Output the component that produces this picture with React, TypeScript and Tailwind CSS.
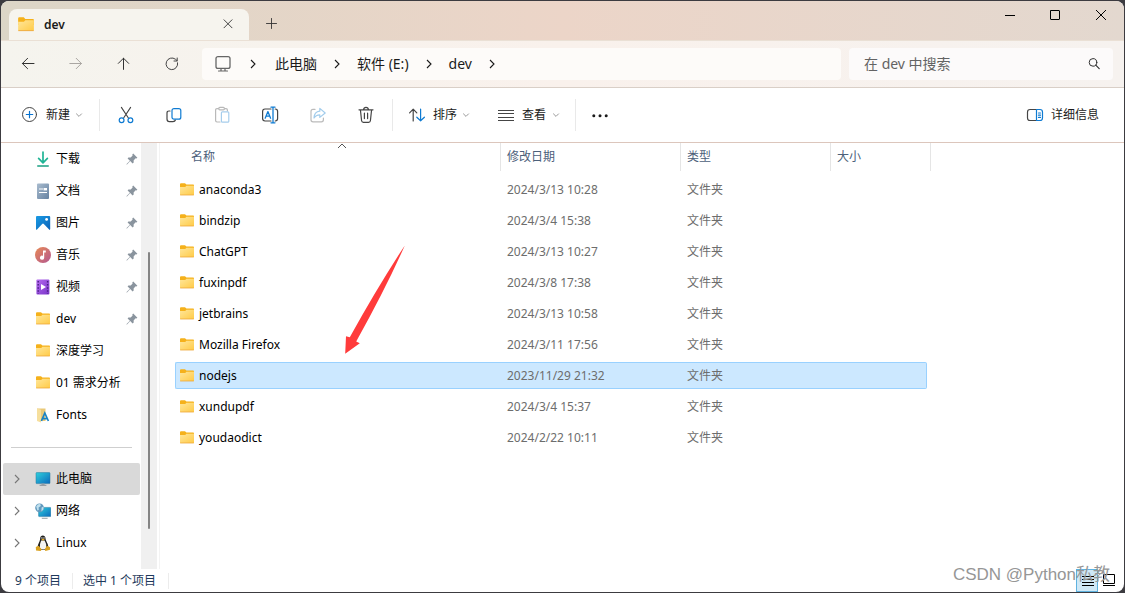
import type { ReactNode } from 'react';

type IconProps = { className?: string };

const FolderIcon = ({ className = 'h-4 w-4' }: IconProps) => (
  <svg className={className} viewBox="0 0 16 16" aria-hidden="true">
    <defs>
      <linearGradient id="folderFace" x1="0" y1="0" x2="1" y2="1">
        <stop offset="0" stopColor="#ffe69a" />
        <stop offset="1" stopColor="#ffcb47" />
      </linearGradient>
    </defs>
    <path d="M1 2.2Q1 1.2 2 1.2H6L7.4 2.6H14.2Q15 2.6 15 3.4V8H1Z" fill="#f5b11b" />
    <path d="M1 5H6.2L7.4 3.8H15V13H1Z" fill="url(#folderFace)" />
    <path d="M1.2 13H14.8" stroke="#eda73a" strokeWidth="0.8" />
  </svg>
);

const Line = ({ children, className = 'h-5 w-5' }: { children: ReactNode; className?: string }) => (
  <svg
    className={className}
    viewBox="0 0 20 20"
    fill="none"
    stroke="#454545"
    strokeWidth="1.2"
    strokeLinecap="round"
    strokeLinejoin="round"
    aria-hidden="true"
  >
    {children}
  </svg>
);

const Chevron = ({ className = 'h-3 w-3' }: IconProps) => (
  <svg className={className} viewBox="0 0 12 12" fill="none" stroke="currentColor" strokeWidth="1.1" aria-hidden="true">
    <path d="M4 2L8 6L4 10" />
  </svg>
);

const DownChevron = () => (
  <svg className="h-2 w-2" viewBox="0 0 8 8" fill="none" stroke="#999" strokeWidth="1" aria-hidden="true">
    <path d="M1.2 2.6L4 5.4L6.8 2.6" />
  </svg>
);

const Pin = () => (
  <svg className="h-3 w-3" viewBox="0 0 12 12" fill="#8a949e" aria-hidden="true">
    <path d="M7.2 0.6L11.4 4.8L10.4 5.6L9.6 5.3L7.6 7.4L7.7 9.6L6.6 10.4L4.2 8L1 11.4L0.5 11.5L0.6 11L3.9 7.7L1.6 5.4L2.4 4.4L4.7 4.4L6.6 2.4L6.3 1.5Z" />
  </svg>
);

const DownloadIcon = () => (
  <svg className="h-4 w-4" viewBox="0 0 16 16" fill="none" strokeLinecap="round" strokeLinejoin="round" aria-hidden="true">
    <path d="M8 1V11.5M3.6 7.4L8 11.8L12.4 7.4" stroke="#1fb495" strokeWidth="1.7" />
    <path d="M2.8 15H13.2" stroke="#1aa083" strokeWidth="1.6" />
  </svg>
);

const DocumentIcon = () => (
  <svg className="h-4 w-4" viewBox="0 0 16 16" aria-hidden="true">
    <defs>
      <linearGradient id="docFill" x1="0" y1="0" x2="1" y2="1">
        <stop offset="0" stopColor="#a9bccf" />
        <stop offset="1" stopColor="#6682a1" />
      </linearGradient>
    </defs>
    <rect x="2" y="0.5" width="12" height="15.5" rx="1" fill="url(#docFill)" />
    <path d="M4 6H8M4 9.5H12" stroke="#fff" strokeWidth="1.2" />
    <rect x="8.6" y="5" width="3.4" height="2.4" fill="#fff" />
  </svg>
);

const PictureIcon = () => (
  <svg className="h-4 w-4" viewBox="0 0 16 16" aria-hidden="true">
    <defs>
      <linearGradient id="picFill" x1="0" y1="0" x2="1" y2="1">
        <stop offset="0" stopColor="#1a9be4" />
        <stop offset="1" stopColor="#0b62b8" />
      </linearGradient>
    </defs>
    <rect x="1" y="1" width="14.2" height="14" rx="1" fill="url(#picFill)" />
    <path d="M1.6 15L7.2 9Q8 8.2 8.8 9L14.6 15Z" fill="#fff" />
    <circle cx="11.6" cy="4.4" r="1.4" fill="#fff" />
  </svg>
);

const MusicIcon = () => (
  <svg className="h-4 w-4" viewBox="0 0 16 16" aria-hidden="true">
    <defs>
      <linearGradient id="musicFill" x1="0" y1="0" x2="1" y2="1">
        <stop offset="0" stopColor="#e88a54" />
        <stop offset="1" stopColor="#b35791" />
      </linearGradient>
    </defs>
    <circle cx="8" cy="8" r="8" fill="url(#musicFill)" />
    <path d="M8 3.4H10.8V5.6H9.2V10.6A2.1 2.1 0 1 1 8 8.8Z" fill="#fff" />
  </svg>
);

const VideoIcon = () => (
  <svg className="h-4 w-4" viewBox="0 0 16 16" aria-hidden="true">
    <defs>
      <linearGradient id="videoFill" x1="0" y1="0" x2="1" y2="1">
        <stop offset="0" stopColor="#b469ee" />
        <stop offset="1" stopColor="#7a35c9" />
      </linearGradient>
    </defs>
    <rect x="1.4" y="0.6" width="13" height="15" rx="1" fill="url(#videoFill)" />
    <path d="M3.2 2V15M12.6 2V15" stroke="#47207f" strokeWidth="1.4" strokeDasharray="1.5 1.6" />
    <path d="M6 5V11L11 8Z" fill="#fff" />
  </svg>
);

const FontsIcon = () => (
  <svg className="h-4 w-4" viewBox="0 0 16 16" aria-hidden="true">
    <path d="M2 1.5H10.5V14H2Z" fill="#e9c877" />
    <path d="M2 1.5L6 2.8V15.5L2 14Z" fill="#f6df9d" />
    <path d="M6.4 14L9.8 6L13.4 14M7.6 11.6H12.2" fill="none" stroke="#1983c6" strokeWidth="1.7" />
  </svg>
);

const MonitorColor = () => (
  <svg className="h-4 w-4" viewBox="0 0 16 16" aria-hidden="true">
    <defs>
      <linearGradient id="pcFill" x1="0" y1="0" x2="1" y2="1">
        <stop offset="0" stopColor="#2fd0dc" />
        <stop offset="1" stopColor="#0b69bd" />
      </linearGradient>
    </defs>
    <rect x="1" y="1.6" width="14" height="11" rx="0.6" fill="url(#pcFill)" stroke="#25779f" strokeWidth="0.5" />
    <path d="M6.4 12.6H9.6V14H6.4Z" fill="#9aa4ac" />
    <path d="M4.6 14.3H11.4" stroke="#7d878f" strokeWidth="0.9" />
  </svg>
);

const NetworkIcon = () => (
  <svg className="h-4 w-4" viewBox="0 0 16 16" aria-hidden="true">
    <rect x="3.6" y="4.4" width="12.2" height="9.2" rx="0.6" fill="url(#pcFill)" stroke="#25779f" strokeWidth="0.5" />
    <path d="M6.8 15.3H12.6" stroke="#8a949c" strokeWidth="0.9" />
    <circle cx="4.6" cy="4.8" r="4.4" fill="#6299bd" />
    <path d="M1.2 3.4Q3 0.6 5.4 1.2L5.8 3L3.6 4.6L3.8 7L2.4 7.6ZM6.6 4.4L8.6 3.6L8.4 6.4L6.4 8.4Z" fill="#bfe0ee" />
  </svg>
);

const LinuxIcon = () => (
  <svg className="h-4 w-4" viewBox="0 0 16 16" aria-hidden="true">
    <path d="M5.2 3.2C5.2-.4 10.4-.4 10.5 3.2C10.5 6 13.6 8.4 13.4 13.4Q8 16.4 2.6 13.4C2.4 8.8 5.2 6.6 5.2 3.2Z" fill="#20201f" />
    <path d="M6.2 5.4H9.6Q11.8 8.6 11.4 13.4Q8 15.4 4.8 13.4Q4.4 9 6.2 5.4Z" fill="#f4f4f2" />
    <path d="M6.2 4.4L8 3.5L9.8 4.4L8 5.7Z" fill="#e6ab25" />
    <circle cx="6.9" cy="2.9" r="0.7" fill="#fff" />
    <circle cx="9" cy="2.9" r="0.7" fill="#fff" />
    <path d="M0.8 12L3.6 10.8L6.8 14.4L5.6 16L1 15.4ZM15 12.2L12 10.8L9.6 14.4L10.4 16L15 14.8Z" fill="#d9a11f" />
  </svg>
);

type Place = { label: string; icon: ReactNode; pinned?: boolean; branch?: boolean; active?: boolean };

const quickAccess: Place[] = [
  { label: '下载', icon: <DownloadIcon />, pinned: true },
  { label: '文档', icon: <DocumentIcon />, pinned: true },
  { label: '图片', icon: <PictureIcon />, pinned: true },
  { label: '音乐', icon: <MusicIcon />, pinned: true },
  { label: '视频', icon: <VideoIcon />, pinned: true },
  { label: 'dev', icon: <FolderIcon />, pinned: true },
  { label: '深度学习', icon: <FolderIcon /> },
  { label: '01 需求分析', icon: <FolderIcon /> },
  { label: 'Fonts', icon: <FontsIcon /> },
];

const devices: Place[] = [
  { label: '此电脑', icon: <MonitorColor />, branch: true, active: true },
  { label: '网络', icon: <NetworkIcon />, branch: true },
  { label: 'Linux', icon: <LinuxIcon />, branch: true },
];

const files = [
  { name: 'anaconda3', date: '2024/3/13 10:28' },
  { name: 'bindzip', date: '2024/3/4 15:38' },
  { name: 'ChatGPT', date: '2024/3/13 10:27' },
  { name: 'fuxinpdf', date: '2024/3/8 17:38' },
  { name: 'jetbrains', date: '2024/3/13 10:58' },
  { name: 'Mozilla Firefox', date: '2024/3/11 17:56' },
  { name: 'nodejs', date: '2023/11/29 21:32', selected: true },
  { name: 'xundupdf', date: '2024/3/4 15:37' },
  { name: 'youdaodict', date: '2024/2/22 10:11' },
];

const PlaceItem = ({ place }: { place: Place }) => (
  <li>
    <a
      href="#"
      className={`flex h-8 items-center rounded-xs pr-0.5 pl-2 text-black ${place.active ? 'bg-[#d9d9d9]' : ''}`}
    >
      <span className="flex w-6 text-[#767676]">{place.branch && <Chevron />}</span>
      {place.icon}
      <span className="ml-[5px] flex-1 whitespace-nowrap">{place.label}</span>
      {place.pinned && <Pin />}
    </a>
  </li>
);

const Separator = () => <span className="h-8 w-px shrink-0 bg-[#e9e9e9]" />;

const IconButton = ({ label, children, disabled }: { label: string; children: ReactNode; disabled?: boolean }) => (
  <button
    type="button"
    aria-label={label}
    disabled={disabled}
    className="flex h-8 w-12 shrink-0 items-center justify-center"
  >
    {children}
  </button>
);

const Crumb = ({ children }: { children: ReactNode }) => (
  <>
    <a href="#" className="whitespace-nowrap">
      {children}
    </a>
    <Chevron className="mx-3.5 h-3 w-3 shrink-0" />
  </>
);

function TitleBar() {
  return (
    <header className="flex h-[39px] items-end bg-linear-to-r from-[#dcd6c7] via-[#ecd5c8] to-[#e3d8cf] pl-2">
      <div className="flex h-[31px] w-60 items-center rounded-t-lg bg-[#f6f4ee] px-2">
        <FolderIcon className="h-[18px] w-[18px]" />
        <span className="ml-[9px] flex-1 font-semibold text-[#1b1b1b]">dev</span>
        <button type="button" aria-label="关闭标签页" className="flex h-6 w-6 items-center justify-center">
          <Line>
            <path d="M5 4.8L13 12.8M13 4.8L5 12.8" strokeWidth="0.9" stroke="#333" />
          </Line>
        </button>
      </div>
      <button type="button" aria-label="新建标签页" className="ml-2 flex h-8 w-7 items-center justify-center">
        <Line>
          <path d="M5.5 9.5H15.5M10.5 4.5V14.5" strokeWidth="0.9" stroke="#333" />
        </Line>
      </button>
      <div className="ml-auto flex h-full items-start">
        <button type="button" aria-label="最小化" className="flex h-7 w-[46px] items-center justify-center">
          <Line>
            <path d="M6 10.5H16" strokeWidth="1" stroke="#000" strokeLinecap="butt" />
          </Line>
        </button>
        <button type="button" aria-label="最大化" className="flex h-7 w-[46px] items-center justify-center">
          <Line>
            <rect x="5.5" y="5.5" width="9" height="9" rx="0.5" strokeWidth="1" stroke="#000" />
          </Line>
        </button>
        <button type="button" aria-label="关闭" className="flex h-7 w-[46px] items-center justify-center">
          <Line>
            <path d="M5.3 5.3L14.7 14.7M14.7 5.3L5.3 14.7" strokeWidth="1" stroke="#000" />
          </Line>
        </button>
      </div>
    </header>
  );
}

function AddressBar() {
  return (
    <div className="flex h-12 items-center gap-2 border-y border-t-[#eae0d5] border-b-[#d9cfc7] bg-linear-to-r from-[#f5f4ee] via-[#f9f1ec] to-[#f6f2ef] pr-[11px] pl-px">
      <nav className="flex" aria-label="导航">
        <IconButton label="后退">
          <Line>
            <path d="M18 9.5H6.4M11.6 4.3L6.4 9.5L11.6 14.7" stroke="#333" strokeWidth="1" />
          </Line>
        </IconButton>
        <IconButton label="前进" disabled>
          <Line>
            <path d="M5.8 9.5H17.4M12.2 4.3L17.4 9.5L12.2 14.7" stroke="#aaa6a2" strokeWidth="1" />
          </Line>
        </IconButton>
        <IconButton label="向上">
          <Line>
            <path d="M11.5 15.4V4.2M6.3 9.4L11.5 4.2L16.7 9.4" stroke="#333" strokeWidth="1" />
          </Line>
        </IconButton>
        <IconButton label="刷新">
          <Line>
            <path d="M17.6 8.8A5.8 5.8 0 1 1 15.4 5.2L17 6.6M17.2 4V7H14" stroke="#444" strokeWidth="1" />
          </Line>
        </IconButton>
      </nav>
      <div className="flex h-8 min-w-0 flex-1 items-center rounded-sm bg-[#fdfbf9] pl-[11px] text-sm text-[#1b1b1b]">
        <Line>
          <rect x="3" y="2.6" width="14" height="11.8" rx="2" stroke="#666" strokeWidth="1.3" />
          <path d="M8 14.6V16.6M12 14.6V16.6M5.5 17H14.5" stroke="#666" strokeWidth="1.2" />
        </Line>
        <Chevron className="mr-4 ml-3.5 h-3 w-3 shrink-0" />
        <Crumb>此电脑</Crumb>
        <Crumb>软件 (E:)</Crumb>
        <Crumb>dev</Crumb>
      </div>
      <label className="flex h-8 w-[264px] items-center rounded-sm bg-[#fcfafa] pr-[9px] pl-[15px]">
        <input
          type="search"
          aria-label="搜索"
          placeholder="在 dev 中搜索"
          className="min-w-0 flex-1 bg-transparent text-sm outline-none placeholder:text-[#636363]"
        />
        <Line>
          <circle cx="9" cy="8.4" r="3.8" strokeWidth="1" stroke="#333" />
          <path d="M11.8 11.2L15.2 14.6" strokeWidth="1.2" stroke="#333" />
        </Line>
      </label>
    </div>
  );
}

function Toolbar() {
  return (
    <div className="flex h-[55px] items-center border-b border-[#dcc6bc] bg-white text-[#1b1b1b]" role="toolbar">
      <button type="button" className="flex h-8 w-[98px] items-center pl-[19px]">
        <Line>
          <circle cx="9.5" cy="9.5" r="7" strokeWidth="1" />
          <path d="M9.5 6.3V12.7M6.3 9.5H12.7" stroke="#0a73cf" />
        </Line>
        <span className="mr-[5px] ml-1.5">新建</span>
        <DownChevron />
      </button>
      <Separator />
      <div className="flex pl-0.5">
        <IconButton label="剪切">
          <Line>
            <path d="M5.4 2.4L12.4 13M14.6 2.4L7.6 13" strokeWidth="1.1" />
            <circle cx="5.6" cy="15.2" r="2.4" stroke="#0f7bd2" />
            <circle cx="14.4" cy="15.2" r="2.4" stroke="#0f7bd2" />
          </Line>
        </IconButton>
        <IconButton label="复制">
          <Line>
            <path d="M6 6H5Q3 6 3 8V14Q3 16.6 5.4 16.6H9Q11 16.6 11.4 15" />
            <rect x="8" y="3.6" width="8.8" height="10.6" rx="2" stroke="#0f7bd2" />
          </Line>
        </IconButton>
        <IconButton label="粘贴" disabled>
          <Line>
            <path d="M8 17H5Q3.6 17 3.6 15.6V4.8Q3.6 3.6 5 3.6H14Q15.4 3.6 15.4 5V6" stroke="#b9b9b9" />
            <rect x="6.8" y="2.4" width="5.6" height="2.4" rx="1" stroke="#b9b9b9" fill="#fff" />
            <rect x="9.4" y="6.8" width="7.4" height="10.4" rx="1" stroke="#a6cdec" />
          </Line>
        </IconButton>
        <IconButton label="重命名">
          <Line>
            <path d="M11 4H5Q2.6 4 2.6 6.4V13.6Q2.6 16 5 16H11M15.2 4Q17.6 4 17.6 6.4V13.6Q17.6 16 15.2 16" />
            <path d="M13 2.2V17.8M11 2.2H15M11 17.8H15M5.2 13.2L7.9 6.6L10.6 13.2M6.2 11.2H9.6" stroke="#0f7bd2" strokeWidth="1.3" />
          </Line>
        </IconButton>
        <IconButton label="共享" disabled>
          <Line>
            <path d="M7 4.4H5Q3 4.4 3 6.4V14.8Q3 16.8 5 16.8H13.4Q15.4 16.8 15.4 14.8V13" stroke="#bbb" />
            <path d="M11.8 3.4L17.2 8L11.8 12.4V9.8Q7.8 9.8 6 13Q6.2 6.8 11.8 6.2Z" stroke="#a3cdec" />
          </Line>
        </IconButton>
        <IconButton label="删除">
          <Line>
            <path d="M3 4.8H17M4.4 4.8L5.6 15.8Q5.8 17.4 7.4 17.4H12.6Q14.2 17.4 14.4 15.8L15.6 4.8M7.6 4.6Q7.8 2.4 10 2.4Q12.2 2.4 12.4 4.6M8.4 8.2V13.6M11.6 8.2V13.6" />
          </Line>
        </IconButton>
      </div>
      <span className="w-0.5" />
      <Separator />
      <button type="button" className="flex h-8 w-[90px] items-center pl-3.5">
        <Line>
          <path d="M6.2 16V4.2M2.6 7.8L6.2 4.2L9.8 7.8" />
          <path d="M13.6 4V15.8M9.8 12.2L13.6 15.8L17.4 12.2" stroke="#0f7bd2" />
        </Line>
        <span className="mr-[5px] ml-1.5">排序</span>
        <DownChevron />
      </button>
      <button type="button" className="flex h-8 w-[92px] items-center pl-3.5">
        <Line>
          <path d="M1 5.5H17M1 8.5H17M1 12.5H17M1 15.5H17" strokeWidth="1" strokeLinecap="butt" />
        </Line>
        <span className="mr-1.5 ml-[5px]">查看</span>
        <DownChevron />
      </button>
      <Separator />
      <IconButton label="更多">
        <Line>
          <g fill="#1b1b1b" stroke="none">
            <circle cx="3.8" cy="10.8" r="1.5" />
            <circle cx="10" cy="10.8" r="1.5" />
            <circle cx="16.2" cy="10.8" r="1.5" />
          </g>
        </Line>
      </IconButton>
      <button type="button" className="mr-[25px] ml-auto flex h-8 items-center gap-1.5">
        <Line>
          <path d="M11.5 4.5H5Q2.5 4.5 2.5 7V13Q2.5 15.5 5 15.5H11.5" />
          <path d="M11.5 4.5H15Q17.5 4.5 17.5 7V13Q17.5 15.5 15 15.5H11.5ZM13.5 8H15.5M13.5 10.2H15.5M13.5 12.4H15.5" stroke="#0f7bd2" />
        </Line>
        详细信息
      </button>
    </div>
  );
}

function Sidebar() {
  return (
    <aside className="flex w-[159px] shrink-0 border-r border-[#f3f3f3]">
      <div className="min-w-0 flex-1 pl-0.5">
        <ul>
          {quickAccess.map((place) => (
            <PlaceItem key={place.label} place={place} />
          ))}
        </ul>
        <div className="flex h-8 items-center pr-2 pl-2">
          <hr className="w-full border-[#cfcfcf]" />
        </div>
        <ul>
          {devices.map((place) => (
            <PlaceItem key={place.label} place={place} />
          ))}
        </ul>
      </div>
      <div className="mr-0.5 ml-px w-4 bg-[#f0f0f0] pt-[109px] pl-[7px]">
        <div className="h-[277px] w-0.5 rounded-full bg-[#858585]" />
      </div>
    </aside>
  );
}

const headCell = 'flex h-7 items-center border-r border-[#e5e5e5]';

function FileTable() {
  return (
    <table className="ml-[15px] w-[756px] table-fixed text-left">
      <thead className="text-[#4c607a]">
        <tr className="h-[31px] align-top">
          <th scope="col" className="w-[326px] font-normal">
            <div className={`relative ${headCell} pl-4`}>
              名称
              <svg className="absolute top-0 left-[162px] h-1.5 w-2.5" viewBox="0 0 10 6" fill="none" stroke="#555" aria-hidden="true">
                <path d="M1 5L5 1L9 5" />
              </svg>
            </div>
          </th>
          <th scope="col" className="w-[180px] font-normal">
            <div className={`${headCell} pl-1.5`}>修改日期</div>
          </th>
          <th scope="col" className="w-[150px] font-normal">
            <div className={`${headCell} pl-1.5`}>类型</div>
          </th>
          <th scope="col" className="w-[100px] font-normal">
            <div className={`${headCell} pl-1.5`}>大小</div>
          </th>
        </tr>
      </thead>
      <tbody className="text-[#6d6d6d]">
        {files.map((file) => {
          const fill = file.selected ? 'border-[#99d1ff] bg-[#cce8ff]' : 'border-transparent';
          return (
            <tr key={file.name} className="h-[31px]">
              <td>
                <div className={`flex h-[27px] items-center gap-1 rounded-l-xs border-y border-l pl-[3px] text-black ${fill}`}>
                  <FolderIcon />
                  {file.name}
                </div>
              </td>
              <td>
                <div className={`flex h-[27px] items-center border-y pl-1.5 ${fill}`}>{file.date}</div>
              </td>
              <td>
                <div className={`flex h-[27px] items-center border-y pl-1.5 ${fill}`}>文件夹</div>
              </td>
              <td>
                <div className={`mr-1 h-[27px] rounded-r-xs border-y border-r ${fill}`} />
              </td>
            </tr>
          );
        })}
      </tbody>
    </table>
  );
}

function StatusBar() {
  return (
    <footer className="relative flex h-[23px] items-center pr-1 pl-3.5 text-[#1e395b]">
      <span className="w-[58px] border-r border-[#ececec]">9 个项目</span>
      <span className="w-24 border-r border-[#ececec] pl-2.5">选中 1 个项目</span>
      <div className="ml-auto flex">
        <button
          type="button"
          aria-label="详细信息视图"
          className="flex h-[23px] w-[22px] items-center justify-center border border-[#5fb2df] bg-[#cfe8f6]"
        >
          <svg className="h-4 w-4" viewBox="0 0 16 16" stroke="#000" aria-hidden="true">
            <path d="M3 3.5H15M3 6.5H15M3 9.5H15M3 12.5H15" />
          </svg>
        </button>
        <button type="button" aria-label="大图标视图" className="flex h-[23px] w-[22px] items-center justify-center">
          <svg className="h-4 w-4" viewBox="0 0 16 16" fill="none" stroke="#000" aria-hidden="true">
            <path d="M2.5 1.5H13.5V10.5H2.5ZM2 12.5H14" />
          </svg>
        </button>
      </div>
      <div className="pointer-events-none absolute right-[14px] bottom-[5px] font-['Liberation_Sans','Noto_Sans_CJK_SC',sans-serif] text-[17px] leading-6 whitespace-nowrap text-[#969696]">
        CSDN @Python私教
      </div>
    </footer>
  );
}

export default function App() {
  return (
    <div className="flex min-h-screen bg-[#3c3b40] p-px font-['Noto_Sans','Noto_Sans_CJK_SC',sans-serif] text-xs">
      <div className="flex min-w-0 flex-1 flex-col overflow-hidden rounded-lg bg-white">
        <TitleBar />
        <AddressBar />
        <Toolbar />
        <div className="flex flex-1">
          <Sidebar />
          <main className="min-w-0 flex-1">
            <FileTable />
          </main>
        </div>
        <StatusBar />
      </div>
      <svg className="pointer-events-none absolute top-[244px] left-[344px] h-[110px] w-[62px]" viewBox="0 0 62 110" aria-hidden="true">
        <path d="M60.8 1.4Q33 44 5.8 93.2L2 92.2L1.2 109.8L15.8 99.2L12.2 97.4Q42 44 60.8 1.4Z" fill="#ff3b3b" />
      </svg>
    </div>
  );
}
